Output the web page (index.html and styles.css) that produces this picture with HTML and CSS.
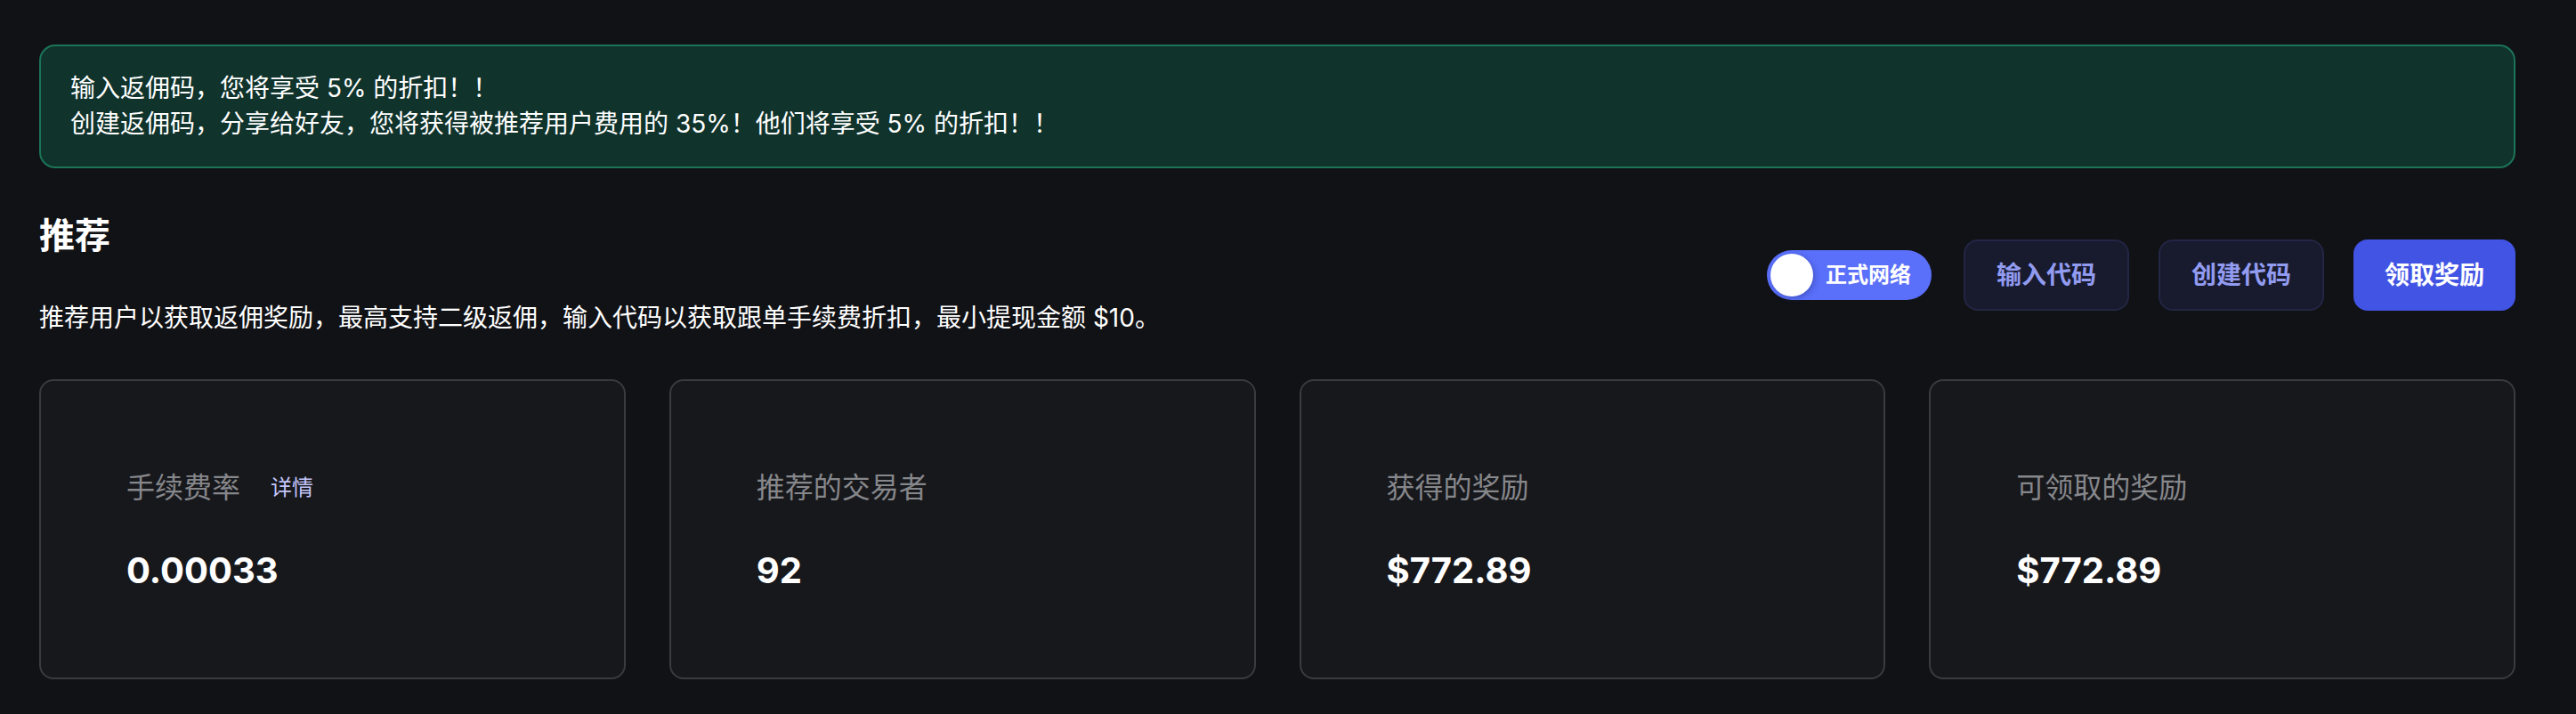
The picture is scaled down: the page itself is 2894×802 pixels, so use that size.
FILE: index.html
```html
<!DOCTYPE html>
<html lang="zh-CN">
<head>
<meta charset="utf-8">
<title>推荐</title>
<link rel="stylesheet" href="styles.css">
</head>
<body>
<main class="page">
  <div class="notice">
    <p>输入返佣码，您将享受 5% 的折扣！！</p>
    <p>创建返佣码，分享给好友，您将获得被推荐用户费用的 35%！他们将享受 5% 的折扣！！</p>
  </div>

  <section class="header">
    <div class="intro">
      <h1 class="title">推荐</h1>
      <p class="desc">推荐用户以获取返佣奖励，最高支持二级返佣，输入代码以获取跟单手续费折扣，最小提现金额 $10。</p>
    </div>
    <div class="actions">
      <div class="toggle"><span class="knob"></span><span class="toggle-label">正式网络</span></div>
      <button class="btn btn-secondary">输入代码</button>
      <button class="btn btn-secondary">创建代码</button>
      <button class="btn btn-primary">领取奖励</button>
    </div>
  </section>

  <section class="stats">
    <div class="card">
      <div class="label">手续费率<span class="link">详情</span></div>
      <div class="value">0.00033</div>
    </div>
    <div class="card">
      <div class="label">推荐的交易者</div>
      <div class="value">92</div>
    </div>
    <div class="card">
      <div class="label">获得的奖励</div>
      <div class="value">$772.89</div>
    </div>
    <div class="card">
      <div class="label">可领取的奖励</div>
      <div class="value">$772.89</div>
    </div>
  </section>
</main>
</body>
</html>
```

FILE: styles.css
```css
* { box-sizing: border-box; }
html, body {
  margin: 0;
  padding: 0;
  background: #111216;
}
body {
  font-family: Inter, "Noto Sans CJK SC", "Noto Sans", sans-serif;
  color: #ffffff;
}
.page {
  padding: 50px 68px 40px 44px;
  display: flex;
  flex-direction: column;
}
.notice {
  background: #10332c;
  border: 2px solid #1b7456;
  border-radius: 18px;
  padding: 27px 33px 28px;
  font-size: 28px;
  line-height: 40px;
  color: #ffffff;
}
.notice p { margin: 0; }

.header {
  margin-top: 52px;
  display: flex;
  align-items: center;
  justify-content: space-between;
}
.title {
  margin: 0;
  font-size: 40px;
  line-height: 48px;
  font-weight: 700;
}
.desc {
  margin: 48px 0 0;
  font-size: 28px;
  line-height: 40px;
}
.actions {
  display: flex;
  align-items: center;
  gap: 33px;
}
.toggle {
  width: 185px;
  height: 56px;
  border-radius: 28px;
  background: #5a70fa;
  display: flex;
  align-items: center;
  padding: 0 4px;
  margin-right: 3px;
}
.knob {
  width: 48px;
  height: 48px;
  border-radius: 50%;
  background: #ffffff;
  box-shadow: 2px 2px 6px rgba(40, 50, 140, 0.45);
}
.toggle-label {
  margin-left: 14px;
  font-size: 24px;
  font-weight: 700;
  color: #ffffff;
  line-height: 32px;
}
.btn {
  font-family: Inter, "Noto Sans CJK SC", sans-serif;
  font-size: 28px;
  font-weight: 700;
  line-height: 40px;
  height: 80px;
  padding: 0 35px;
  border-radius: 16px;
  cursor: pointer;
}
.btn-secondary {
  background: #181a2d;
  border: 2px solid #232644;
  color: #919bf0;
}
.btn-primary {
  background: #4254e4;
  border: 2px solid #4254e4;
  color: #ffffff;
  padding: 0 33px;
}

.stats {
  margin-top: 49px;
  display: grid;
  grid-template-columns: repeat(4, 1fr);
  gap: 49px;
}
.card {
  height: 337px;
  background: #17181c;
  border: 2px solid #3a3b40;
  border-radius: 16px;
  padding: 0 96px;
  display: flex;
  flex-direction: column;
  justify-content: center;
}
.label {
  font-size: 32px;
  line-height: 48px;
  color: #86878b;
  display: flex;
  align-items: center;
}
.link {
  margin-left: 34px;
  font-size: 24px;
  color: #c3c6fb;
}
.value {
  margin-top: 45px;
  font-size: 40px;
  line-height: 48px;
  font-weight: 700;
  color: #ffffff;
}
```
